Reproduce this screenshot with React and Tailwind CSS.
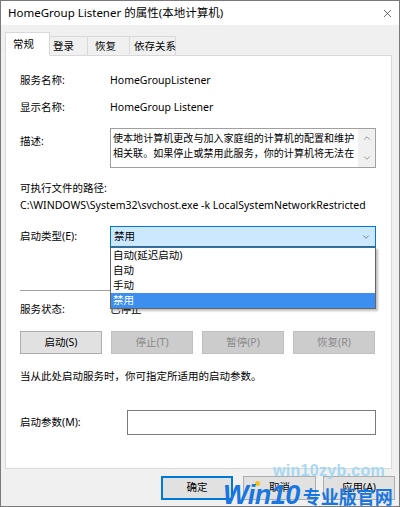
import { ChevronDown, ChevronUp, X } from 'lucide-react'

const font = { fontFamily: '"Noto Sans", "Noto Sans CJK SC", sans-serif' }

const tabs = [
  { label: '常规', w: 'w-[45px]', pl: 'pl-[7px]', active: true },
  { label: '登录', w: 'w-[39px]', pl: 'pl-[3px]' },
  { label: '恢复', w: 'w-[43px]', pl: 'pl-[7px]' },
  { label: '依存关系', w: 'w-[47px]', pl: 'pl-[4px]' },
]

const options = ['自动(延迟启动)', '自动', '手动', '禁用']

function Btn({ children, disabled, className = '' }) {
  return (
    <div
      className={`h-[23px] flex items-center justify-center border text-[10.5px] ${
        disabled ? 'bg-[#cccccc] border-[#bfbfbf] text-[#8a8a8a]' : 'bg-[#e1e1e1] border-[#adadad] text-black'
      } ${className}`}
    >
      {children}
    </div>
  )
}

export default function App() {
  return (
    <div style={font} className="relative w-[400px] h-[507px] bg-[#f0f0f0] border border-[#7a7a7a] text-black text-[10.5px] overflow-hidden flex flex-col">
      {/* title bar */}
      <div className="h-[24px] bg-white flex items-center justify-between pl-[7px] pr-[5px] shrink-0">
        <span className="text-[11.5px] text-black">HomeGroup Listener 的属性(本地计算机)</span>
        <X className="w-[13px] h-[13px] text-[#222]" strokeWidth={1.2} />
      </div>

      {/* tabs */}
      <div className="pt-[7px] px-[4px] flex items-end h-[30px] shrink-0">
        {tabs.map(t => (
          <div
            key={t.label}
            className={`${t.w} ${t.pl} flex items-center whitespace-nowrap border border-[#d9d9d9] ${
              t.active ? 'h-[24px] bg-white border-b-white relative z-10 -mb-px' : 'h-[19px] bg-[#f0f0f0] border-b-0 -ml-px'
            }`}
          >
            <span className="text-[10.5px] leading-none">{t.label}</span>
          </div>
        ))}
      </div>

      {/* panel */}
      <div className="ml-[4px] mr-[7px] h-[414px] bg-white border border-[#d9d9d9] pl-[14px] pr-[15px] pt-[17px] flex flex-col shrink-0">
        <div className="flex items-center h-[16px]">
          <span className="w-[90px]">服务名称:</span>
          <span>HomeGroupListener</span>
        </div>
        <div className="flex items-center h-[16px] mt-[11px]">
          <span className="w-[90px]">显示名称:</span>
          <span>HomeGroup Listener</span>
        </div>
        <div className="flex items-start mt-[12px]">
          <span className="w-[90px] pt-[6px]">描述:</span>
          <div className="flex-1 h-[40px] border border-[#a0a0a0] flex">
            <div className="flex-1 pl-[2px] pt-[2px] leading-[15px] text-[10px] tracking-[0.05px] whitespace-nowrap overflow-hidden">
              <div>使本地计算机更改与加入家庭组的计算机的配置和维护</div>
              <div>相关联。如果停止或禁用此服务，你的计算机将无法在</div>
            </div>
            <div className="w-[17px] bg-[#f0f0f0] flex flex-col items-center justify-between py-[4px]">
              <ChevronUp className="w-[10px] h-[10px] text-[#606060]" strokeWidth={1.5} />
              <ChevronDown className="w-[10px] h-[10px] text-[#606060]" strokeWidth={1.5} />
            </div>
          </div>
        </div>
        <div className="h-[16px] flex items-center mt-[13px]">可执行文件的路径:</div>
        <div className="h-[16px] flex items-center mt-[1px] whitespace-nowrap">
          C:\WINDOWS\System32\svchost.exe -k LocalSystemNetworkRestricted
        </div>

        {/* startup type */}
        <div className="flex items-center mt-[12px] relative">
          <span className="w-[90px]">启动类型(E):</span>
          <div className="flex-1 h-[21px] bg-[#cce8ff] border border-[#0078d7] flex items-center justify-between pl-[3px] pr-[4px]">
            <span>禁用</span>
            <ChevronDown className="w-[10px] h-[10px] text-[#444]" strokeWidth={1.5} />
          </div>
          <div className="absolute left-[90px] right-0 top-[21px] z-20 bg-white border border-[#646464] shadow-[2px_2px_2px_rgba(0,0,0,0.25)]">
            {options.map(o => (
              <div
                key={o}
                className={`h-[15px] flex items-center pl-[2px] ${o === '禁用' ? 'bg-[#3c8fee] text-white' : ''}`}
              >
                {o}
              </div>
            ))}
          </div>
        </div>

        <div className="h-px bg-[#a0a0a0] mt-[43px]" />

        <div className="flex items-center h-[16px] mt-[11px]">
          <span className="w-[90px]">服务状态:</span>
          <span>已停止</span>
        </div>

        <div className="flex gap-[9px] mt-[13px]">
          <Btn className="w-[82px]">启动(S)</Btn>
          <Btn className="w-[82px]" disabled>停止(T)</Btn>
          <Btn className="w-[82px]" disabled>暂停(P)</Btn>
          <Btn className="w-[82px]" disabled>恢复(R)</Btn>
        </div>

        <div className="h-[16px] flex items-center mt-[15px]">当从此处启动服务时，你可指定所适用的启动参数。</div>

        <div className="flex items-center mt-[25px]">
          <span className="w-[107px]">启动参数(M):</span>
          <div className="flex-1 h-[25px] border border-[#7a7a7a] bg-white" />
        </div>
      </div>

      {/* dialog buttons */}
      <div className="flex justify-end pr-[4px] mt-[7px]">
        <div className="w-[72px] h-[24px] border-2 border-[#0078d7] bg-[#e1e1e1] flex items-center justify-center">确定</div>
        <div className="w-[73px] h-[24px] ml-[10px] border border-[#adadad] bg-[#e1e1e1] flex items-center justify-center">取消</div>
        <div className="w-[72px] h-[24px] ml-[7px] border border-[#adadad] bg-[#e1e1e1] flex items-center justify-center">应用(A)</div>
      </div>

      {/* watermark */}
      <div className="absolute left-[272px] top-[458px] z-30 text-[16px] font-bold text-[#9fd6f2] opacity-90 tracking-[0.3px]" style={{ fontFamily: '"Liberation Sans", sans-serif' }}>
        win10zyb.com
      </div>
      <div className="absolute left-[254px] top-[480px] w-[5px] h-[5px] rounded-full bg-[#f4c01c] z-30" />
      <div className="absolute left-[222px] top-[481px] z-30 flex items-end text-[#1976e0]" style={{ fontFamily: '"Liberation Sans", "Noto Sans CJK SC", sans-serif' }}>
        <span className="text-[27px] font-bold italic leading-[26px] tracking-[-0.5px]">Win10</span>
        <span className="text-[18px] font-bold leading-[24px] ml-[3px]" style={{ fontFamily: '"Noto Sans CJK SC", sans-serif' }}>专业版官网</span>
      </div>
    </div>
  )
}
